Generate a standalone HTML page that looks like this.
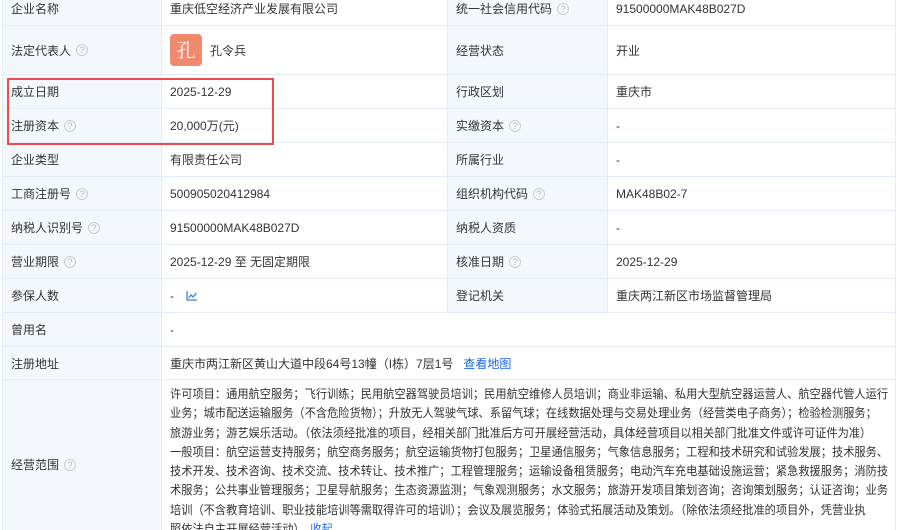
<!DOCTYPE html>
<html><head><meta charset="utf-8"><style>
*{margin:0;padding:0;box-sizing:border-box}
html,body{width:904px;height:530px;overflow:hidden}
body{background:#fff;font-family:"Liberation Sans","Noto Sans CJK SC",sans-serif;font-size:12px;color:#333;position:relative}
.c{position:absolute;border-right:1px solid #e4edf7;border-bottom:1px solid #e4edf7;display:flex;align-items:center;white-space:nowrap}
.l{background:#f4f8fd;padding-left:8px}
.v{padding-left:8px}
.q{display:inline-block;width:12px;height:12px;border:1px solid #ccc;border-radius:50%;color:#bbb;font-size:9px;line-height:10px;text-align:center;margin-left:5px}
.scope{position:absolute;left:170px;top:385px;line-height:19.3px;white-space:nowrap;font-size:12px;color:#333;transform:scaleX(0.935);transform-origin:0 0}
a{color:#1a66e8;text-decoration:none}
</style></head><body>
<div style="position:absolute;left:2px;top:0;width:1px;height:530px;background:#e4edf7"></div>
<div class="c l" style="left:3px;top:-8px;width:159px;height:34px">企业名称</div>
<div class="c v" style="left:162px;top:-8px;width:286px;height:34px">重庆低空经济产业发展有限公司</div>
<div class="c l" style="left:448px;top:-8px;width:160px;height:34px">统一社会信用代码<span class="q">?</span></div>
<div class="c v" style="left:608px;top:-8px;width:288px;height:34px">91500000MAK48B027D</div>

<div class="c l" style="left:3px;top:26px;width:159px;height:49px">法定代表人<span class="q">?</span></div>
<div class="c v" style="left:162px;top:26px;width:286px;height:49px"><span style="display:inline-block;width:32px;height:32px;background:#f08a6e;border-radius:4px;color:#fff;font-size:19px;line-height:32px;text-align:center;font-family:'Noto Serif CJK SC',serif">孔</span><span style="margin-left:8px">孔令兵</span></div>
<div class="c l" style="left:448px;top:26px;width:160px;height:49px">经营状态</div>
<div class="c v" style="left:608px;top:26px;width:288px;height:49px">开业</div>

<div class="c l" style="left:3px;top:75px;width:159px;height:34px">成立日期</div>
<div class="c v" style="left:162px;top:75px;width:286px;height:34px">2025-12-29</div>
<div class="c l" style="left:448px;top:75px;width:160px;height:34px">行政区划</div>
<div class="c v" style="left:608px;top:75px;width:288px;height:34px">重庆市</div>

<div class="c l" style="left:3px;top:109px;width:159px;height:34px">注册资本<span class="q">?</span></div>
<div class="c v" style="left:162px;top:109px;width:286px;height:34px">20,000万(元)</div>
<div class="c l" style="left:448px;top:109px;width:160px;height:34px">实缴资本<span class="q">?</span></div>
<div class="c v" style="left:608px;top:109px;width:288px;height:34px">-</div>

<div class="c l" style="left:3px;top:143px;width:159px;height:34px">企业类型</div>
<div class="c v" style="left:162px;top:143px;width:286px;height:34px">有限责任公司</div>
<div class="c l" style="left:448px;top:143px;width:160px;height:34px">所属行业</div>
<div class="c v" style="left:608px;top:143px;width:288px;height:34px">-</div>

<div class="c l" style="left:3px;top:177px;width:159px;height:34px">工商注册号<span class="q">?</span></div>
<div class="c v" style="left:162px;top:177px;width:286px;height:34px">500905020412984</div>
<div class="c l" style="left:448px;top:177px;width:160px;height:34px">组织机构代码<span class="q">?</span></div>
<div class="c v" style="left:608px;top:177px;width:288px;height:34px">MAK48B02-7</div>

<div class="c l" style="left:3px;top:211px;width:159px;height:34px">纳税人识别号<span class="q">?</span></div>
<div class="c v" style="left:162px;top:211px;width:286px;height:34px">91500000MAK48B027D</div>
<div class="c l" style="left:448px;top:211px;width:160px;height:34px">纳税人资质</div>
<div class="c v" style="left:608px;top:211px;width:288px;height:34px">-</div>

<div class="c l" style="left:3px;top:245px;width:159px;height:34px">营业期限<span class="q">?</span></div>
<div class="c v" style="left:162px;top:245px;width:286px;height:34px">2025-12-29 至 无固定期限</div>
<div class="c l" style="left:448px;top:245px;width:160px;height:34px">核准日期<span class="q">?</span></div>
<div class="c v" style="left:608px;top:245px;width:288px;height:34px">2025-12-29</div>

<div class="c l" style="left:3px;top:279px;width:159px;height:34px">参保人数</div>
<div class="c v" style="left:162px;top:279px;width:286px;height:34px">-<svg style="margin-left:12px" width="12" height="10" viewBox="0 0 12 10"><path d="M1 0V9H11M2.5 7L5 4L7 6L10.5 2" fill="none" stroke="#3b82f0" stroke-width="1.3"/></svg></div>
<div class="c l" style="left:448px;top:279px;width:160px;height:34px">登记机关</div>
<div class="c v" style="left:608px;top:279px;width:288px;height:34px">重庆两江新区市场监督管理局</div>

<div class="c l" style="left:3px;top:313px;width:159px;height:34px">曾用名</div>
<div class="c v" style="left:162px;top:313px;width:734px;height:34px">-</div>

<div class="c l" style="left:3px;top:347px;width:159px;height:33px">注册地址</div>
<div class="c v" style="left:162px;top:347px;width:734px;height:33px">重庆市两江新区黄山大道中段64号13幢（I栋）7层1号<a style="margin-left:10px">查看地图</a></div>

<div class="c l" style="left:3px;top:380px;width:159px;height:170px">经营范围<span class="q">?</span></div>
<div class="c v" style="left:162px;top:380px;width:734px;height:170px"></div>
<div class="scope">许可项目：通用航空服务；飞行训练；民用航空器驾驶员培训；民用航空维修人员培训；商业非运输、私用大型航空器运营人、航空器代管人运行<br>业务；城市配送运输服务（不含危险货物）；升放无人驾驶气球、系留气球；在线数据处理与交易处理业务（经营类电子商务）；检验检测服务；<br>旅游业务；游艺娱乐活动。（依法须经批准的项目，经相关部门批准后方可开展经营活动，具体经营项目以相关部门批准文件或许可证件为准）<br>一般项目：航空运营支持服务；航空商务服务；航空运输货物打包服务；卫星通信服务；气象信息服务；工程和技术研究和试验发展；技术服务、<br>技术开发、技术咨询、技术交流、技术转让、技术推广；工程管理服务；运输设备租赁服务；电动汽车充电基础设施运营；紧急救援服务；消防技<br>术服务；公共事业管理服务；卫星导航服务；生态资源监测；气象观测服务；水文服务；旅游开发项目策划咨询；咨询策划服务；认证咨询；业务<br>培训（不含教育培训、职业技能培训等需取得许可的培训）；会议及展览服务；体验式拓展活动及策划。（除依法须经批准的项目外，凭营业执<br>照依法自主开展经营活动）<a style="margin-left:6px">收起</a></div>

<div style="position:absolute;left:7px;top:78px;width:267px;height:67px;border:2px solid #ef4a4f"></div>
</body></html>
